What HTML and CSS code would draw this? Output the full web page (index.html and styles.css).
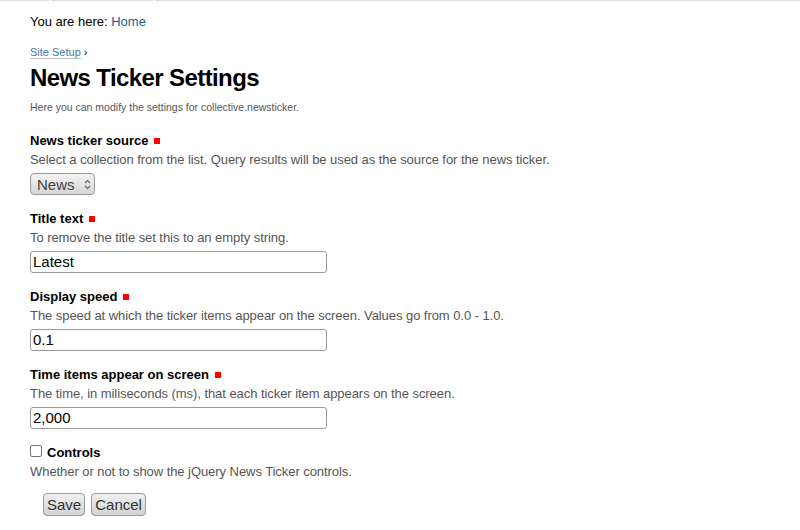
FILE: index.html
```html
<!DOCTYPE html>
<html>
<head>
<meta charset="utf-8">
<link rel="stylesheet" href="styles.css">
</head>
<body>
<div class="topline"><span class="seg s1"></span><span class="seg s2"></span><span class="seg s3"></span></div>
<div class="page">
  <div class="breadcrumbs">You are here: <a href="#">Home</a></div>
  <div class="crumb"><a href="#">Site Setup</a> ›</div>
  <h1 class="title">News Ticker Settings</h1>
  <p class="desc">Here you can modify the settings for collective.newsticker.</p>
  <form class="form">
    <div class="field">
      <label class="label">News ticker source <span class="req"></span></label>
      <div class="help">Select a collection from the list. Query results will be used as the source for the news ticker.</div>
      <div class="select">News <span class="arrows"><svg width="7" height="11" viewBox="0 0 7 11"><path d="M1 4 L3.5 1.5 L6 4" fill="none" stroke="#666" stroke-width="1.2"/><path d="M1 7 L3.5 9.5 L6 7" fill="none" stroke="#666" stroke-width="1.2"/></svg></span></div>
    </div>
    <div class="field">
      <label class="label">Title text <span class="req"></span></label>
      <div class="help">To remove the title set this to an empty string.</div>
      <div class="input">Latest</div>
    </div>
    <div class="field">
      <label class="label">Display speed <span class="req"></span></label>
      <div class="help">The speed at which the ticker items appear on the screen. Values go from 0.0 - 1.0.</div>
      <div class="input">0.1</div>
    </div>
    <div class="field">
      <label class="label">Time items appear on screen <span class="req"></span></label>
      <div class="help">The time, in miliseconds (ms), that each ticker item appears on the screen.</div>
      <div class="input">2,000</div>
    </div>
    <div class="field check">
      <label class="label"><span class="box"></span>Controls</label>
      <div class="help">Whether or not to show the jQuery News Ticker controls.</div>
    </div>
    <div class="buttons">
      <span class="btn">Save</span><span class="btn">Cancel</span>
    </div>
  </form>
</div>
</body>
</html>
```
FILE: styles.css
```css
html, body { margin: 0; padding: 0; background: #fff; }
body { font-family: "Liberation Sans", Arial, sans-serif; color: #000; }
.topline { display: flex; height: 1px; }
.seg { height: 1px; background: #ddd; }
.s1 { width: 49px; }
.s2 { width: 102px; margin-left: 2px; }
.s3 { flex: 1; margin-left: 2px; }
.page { padding: 13px 30px 0 30px; }
a { color: #205c90; text-decoration: none; }
.breadcrumbs { font-size: 13px; line-height: 16px; }
.crumb { font-size: 11px; line-height: 14px; margin-top: 15px; color: #000; }
.crumb a { color: #4677a5; border-bottom: 1px solid #bbb; }
.title { font-size: 24px; line-height: 30px; font-weight: bold; letter-spacing: -0.6px; margin: 4px 0 0 0; }
.desc { font-size: 10.5px; line-height: 14px; color: #555; margin: 7px 0 0 0; }
.form { margin-top: 19px; }
.field { margin-bottom: 16px; }
.label { display: block; font-size: 13px; font-weight: bold; line-height: 16px; }
.req { display: inline-block; width: 6px; height: 6px; background: #f00; margin-left: 2px; vertical-align: 1px; }
.help { font-size: 13px; line-height: 16px; color: #555; margin-top: 3px; margin-bottom: 5px; letter-spacing: -0.06px; }
.select { box-sizing: border-box; width: 65px; height: 22px; border: 1px solid #999; border-radius: 4px; background: linear-gradient(#f3f3f3, #d6d6d6); font-size: 15px; color: #444; display: flex; align-items: center; padding-left: 6px; gap: 9px; }
.arrows { display: flex; }
.input { box-sizing: border-box; width: 297px; height: 22px; border: 1px solid #999; border-radius: 3px; font-size: 15px; line-height: 20px; padding-left: 2px; }
.check { margin-bottom: 0; }
.check .label { display: flex; align-items: center; }
.box { display: inline-block; box-sizing: border-box; width: 12px; height: 12px; border: 1px solid #777; border-radius: 2px; margin-right: 5px; margin-top: -4px; background: #fff; }
.buttons { padding-left: 13px; display: flex; gap: 6px; margin-top: 13px; }
.btn { box-sizing: border-box; height: 23px; border: 1px solid #999; border-radius: 4px; background: linear-gradient(#f0f0f0, #d3d3d3); font-size: 15px; color: #333; padding: 0 3px; line-height: 21px; }
```
